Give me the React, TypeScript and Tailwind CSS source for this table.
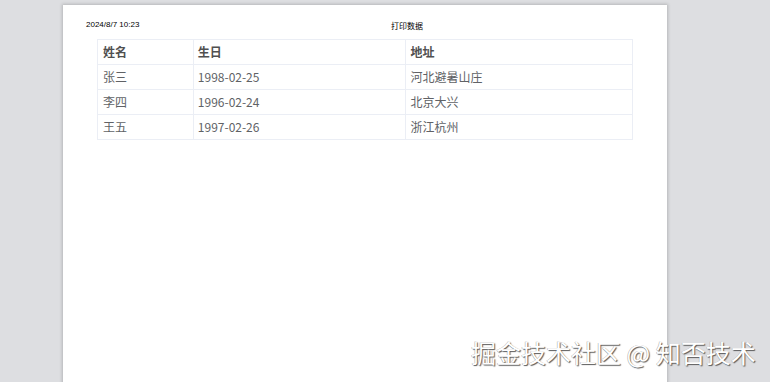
export default function App() {
  const rows = [
    { name: "张三", birth: "1998-02-25", addr: "河北避暑山庄" },
    { name: "李四", birth: "1996-02-24", addr: "北京大兴" },
    { name: "王五", birth: "1997-02-26", addr: "浙江杭州" },
  ];
  const cjk = "font-['Noto_Sans_CJK_SC','Noto_Sans',sans-serif]";
  return (
    <div className="relative w-[770px] h-[382px] overflow-hidden bg-[#dddee1] pl-[63px] pt-[5px]">
      <div className="w-[604px] h-[400px] bg-white shadow-[0_0_3px_1px_rgba(0,0,0,0.18)]">
        {/* print header */}
        <div className="flex items-start pt-[15px] pl-[23px] h-[34px] text-[8px] leading-[10px] text-black">
          <span className="font-['Liberation_Sans',sans-serif] w-[305px]">2024/8/7 10:23</span>
          <span className={`${cjk} mt-[1px]`}>打印数据</span>
        </div>
        {/* data table */}
        <table className={`ml-[34px] w-[536px] border-collapse text-[12px] text-[#606266] ${cjk}`}>
          <colgroup>
            <col className="w-[96px]" />
            <col className="w-[213px]" />
            <col className="w-[227px]" />
          </colgroup>
          <thead>
            <tr className="h-[25px]">
              <th className="border border-[#ebeef5] px-[5px] text-left font-bold text-[#505050]">姓名</th>
              <th className="border border-[#ebeef5] px-[4px] text-left font-bold text-[#505050]">生日</th>
              <th className="border border-[#ebeef5] px-[4px] text-left font-bold text-[#505050]">地址</th>
            </tr>
          </thead>
          <tbody>
            {rows.map((r) => (
              <tr key={r.name} className="h-[25px]">
                <td className="border border-[#ebeef5] px-[5px]">{r.name}</td>
                <td className="border border-[#ebeef5] px-[4px]">{r.birth}</td>
                <td className="border border-[#ebeef5] px-[4px]">{r.addr}</td>
              </tr>
            ))}
          </tbody>
        </table>
      </div>
      <div
        className={`absolute left-[471px] top-[336px] text-[25px] leading-[32px] text-white whitespace-nowrap ${cjk} [text-shadow:1px_1px_1px_#5a5a5a,-0.5px_-0.5px_0.5px_#aaa]`}
      >
        掘金技术社区 @ 知否技术
      </div>
    </div>
  );
}
